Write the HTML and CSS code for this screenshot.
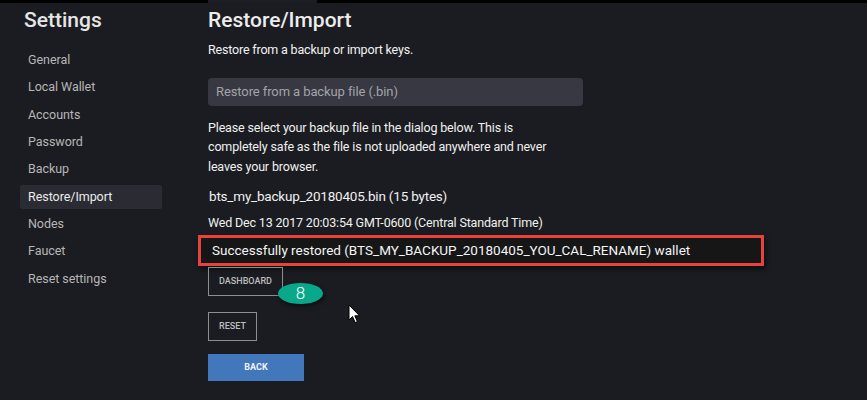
FILE: index.html
```html
<!DOCTYPE html>
<html lang="en">
<head>
<meta charset="utf-8">
<title>Settings - Restore/Import</title>
<link rel="stylesheet" href="styles.css">
</head>
<body>
<div class="topstrip">
  <span class="strip-dark strip-left"></span>
  <span class="strip-gap"></span>
  <span class="strip-dark strip-right"></span>
</div>
<div class="layout">
  <aside class="sidebar">
    <h2 class="side-title">Settings</h2>
    <nav class="side-nav">
      <a class="nav-item">General</a>
      <a class="nav-item">Local Wallet</a>
      <a class="nav-item">Accounts</a>
      <a class="nav-item">Password</a>
      <a class="nav-item">Backup</a>
      <a class="nav-item active">Restore/Import</a>
      <a class="nav-item">Nodes</a>
      <a class="nav-item">Faucet</a>
      <a class="nav-item">Reset settings</a>
    </nav>
  </aside>
  <main class="content">
    <h1 class="page-title">Restore/Import</h1>
    <p class="lead">Restore from a backup or import keys.</p>
    <div class="select-box">Restore from a backup file (.bin)</div>
    <p class="info">Please select your backup file in the dialog below. This is completely safe as the file is not uploaded anywhere and never leaves your browser.</p>
    <div class="filename">bts_my_backup_20180405.bin (15 bytes)</div>
    <div class="date">Wed Dec 13 2017 20:03:54 GMT-0600 (Central Standard Time)</div>
    <div class="success">Successfully restored (BTS_MY_BACKUP_20180405_YOU_CAL_RENAME) wallet</div>
    <div class="actions">
      <div class="btn-wrap">
        <button class="btn btn-outline">Dashboard</button>
        <span class="badge">8</span>
      </div>
      <button class="btn btn-outline btn-reset">Reset</button>
      <button class="btn btn-primary">Back</button>
    </div>
    <svg class="cursor" width="13" height="20" viewBox="0 0 13 20" aria-hidden="true">
      <path d="M1 1 L1 16 L4.5 12.6 L7.2 18.6 L9.4 17.6 L6.8 11.8 L11.6 11.8 Z" fill="#fff" stroke="#000" stroke-width="1" stroke-linejoin="miter"/>
    </svg>
  </main>
</div>
</body>
</html>
```
FILE: styles.css
```css
* { box-sizing: border-box; }
html, body {
  margin: 0;
  padding: 0;
  background: #1b1c21;
  font-family: Roboto, "Noto Sans", "Liberation Sans", sans-serif;
  color: #ececec;
  height: 400px;
  overflow: hidden;
}
.topstrip {
  display: flex;
  height: 3px;
}
.strip-dark { background: #000; }
.strip-left { width: 208px; }
.strip-gap { width: 109px; background: #1d1e23; }
.strip-right { flex: 1; }

.layout {
  display: flex;
}
.sidebar {
  width: 208px;
  flex: none;
  padding-left: 20px;
}
.side-title {
  margin: 4.8px 0 0 4px;
  font-size: 21px;
  line-height: 24px;
  font-weight: 500;
  color: #e6e6e6;
}
.side-nav {
  display: flex;
  flex-direction: column;
  gap: 3.35px;
  margin-top: 16.2px;
}
.nav-item {
  display: block;
  width: 142px;
  height: 24px;
  line-height: 24px;
  padding-left: 8px;
  font-size: 12.5px;
  letter-spacing: -0.05px;
  color: #b6b6b6;
  border-radius: 2px;
}
.nav-item.active {
  background: #2a2b33;
  color: #ececec;
}

.content {
  position: relative;
  flex: 1;
  min-height: 397px;
}
.page-title {
  margin: 4.8px 0 0 0;
  font-size: 21px;
  line-height: 24px;
  font-weight: 500;
  color: #ececec;
}
.lead {
  margin: 9.2px 0 0 0;
  font-size: 12.5px;
  line-height: 18px;
  letter-spacing: -0.18px;
  color: #f2f2f2;
}
.select-box {
  margin-top: 19px;
  width: 375px;
  height: 28px;
  line-height: 28px;
  padding-left: 8px;
  background: #373842;
  border-radius: 4px;
  font-size: 13px;
  letter-spacing: -0.1px;
  color: #a3a3a8;
}
.info {
  margin: 12px 0 0 0;
  width: 355px;
  font-size: 12.5px;
  line-height: 19.4px;
  letter-spacing: -0.15px;
  color: #f0f0f0;
}
.filename {
  margin-top: 9.7px;
  padding-left: 1px;
  font-size: 13.5px;
  line-height: 20px;
  letter-spacing: -0.2px;
  color: #f0f0f0;
}
.date {
  margin-top: 8.1px;
  font-size: 12.5px;
  line-height: 18px;
  letter-spacing: -0.17px;
  color: #f0f0f0;
}
.success {
  margin: 3px 0 0 -10px;
  width: 566px;
  height: 31px;
  line-height: 25px;
  padding-left: 11px;
  border: 3px solid #e8423f;
  background: #161617;
  font-size: 13.5px;
  color: #f4f4f4;
  box-shadow: 2px 3px 5px rgba(0, 0, 0, 0.55);
}
.actions {
  display: flex;
  flex-direction: column;
  align-items: flex-start;
  margin-top: 1px;
}
.btn-wrap {
  position: relative;
}
.btn {
  display: block;
  font-family: Roboto, "Liberation Sans", sans-serif;
  font-size: 9px;
  font-weight: 500;
  text-transform: uppercase;
  cursor: pointer;
  padding: 0;
}
.btn-outline {
  height: 29px;
  width: 75px;
  background: transparent;
  border: 1px solid #8e8e8e;
  color: #bdbdbd;
}
.btn-reset {
  width: 49px;
  margin-top: 16px;
}
.btn-primary {
  margin-top: 13px;
  width: 96px;
  height: 27px;
  border: none;
  background: #4277bb;
  color: #f2f2f2;
  font-weight: 700;
}
.badge {
  position: absolute;
  left: 70px;
  top: 16px;
  width: 45px;
  height: 21px;
  border-radius: 50%;
  background: #0aa88a;
  color: #fff;
  font-size: 17px;
  font-weight: 300;
  line-height: 21px;
  text-align: center;
  box-shadow: 1px 2px 4px rgba(0, 0, 0, 0.6);
}
.cursor {
  position: absolute;
  left: 140px;
  top: 301px;
}
```
